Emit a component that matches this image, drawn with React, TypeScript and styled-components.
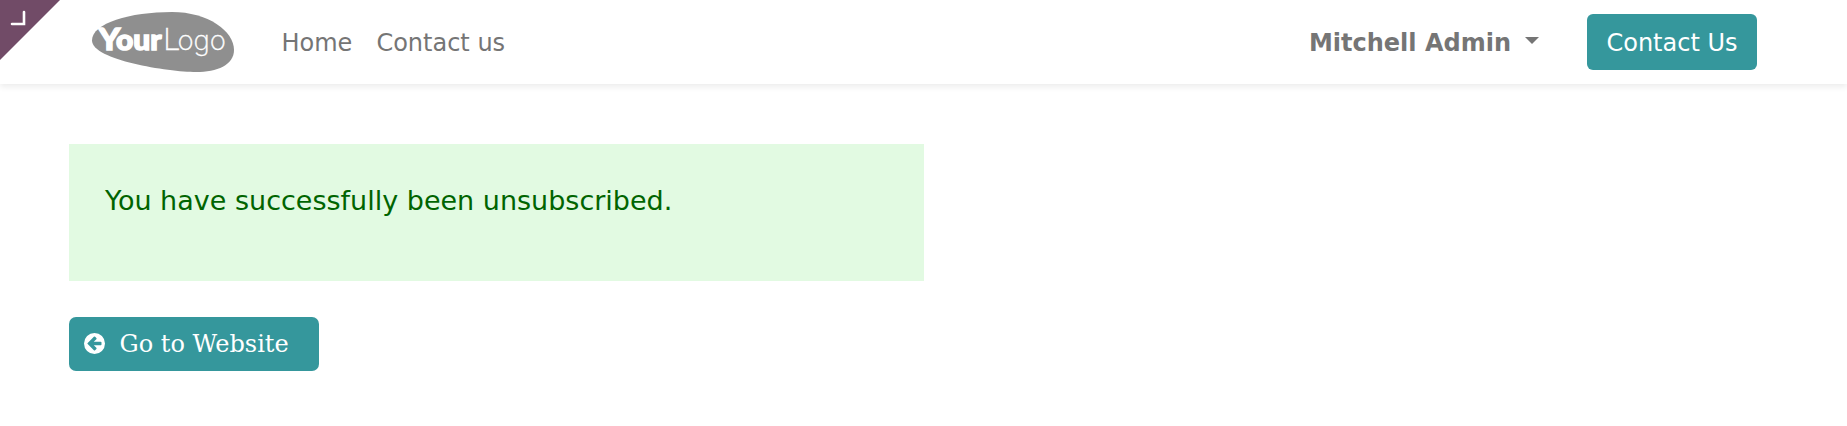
import React from "react";
import styled, { createGlobalStyle } from "styled-components";

const Global = createGlobalStyle`
  * { box-sizing: border-box; }
  body {
    margin: 0;
    background: #fff;
    color: #757575;
    font-family: "DejaVu Sans", sans-serif;
    font-size: 24px;
    line-height: 36px;
  }
  a { color: inherit; text-decoration: none; }
`;

const Header = styled.header`
  position: relative;
  height: 84px;
  padding: 0 90px 0 92px;
  display: flex;
  align-items: center;
  background: #fff;
  box-shadow: 0 3px 6px rgba(0, 0, 0, 0.075);
`;

const Corner = styled.svg`
  position: absolute;
  left: 0;
  top: 0;
`;

const Logo = styled.svg`
  display: block;
  overflow: visible;
`;

const Nav = styled.nav`
  display: flex;
  gap: 24px;
  margin-left: 47.5px;
  padding-top: 2px;
  flex: 1;
`;

const UserMenu = styled.a`
  display: flex;
  align-items: center;
  font-weight: 700;
  margin-right: 48px;
  padding-top: 2px;
`;

const Caret = styled.span`
  margin: -5px 0 0 14px;
  border: 7px solid transparent;
  border-top-color: currentColor;
  border-bottom: 0;
`;

const ContactButton = styled.a`
  width: 170px;
  height: 56px;
  padding-top: 2px;
  display: flex;
  align-items: center;
  justify-content: center;
  border-radius: 6px;
  background: #35979c;
  color: #fff;
`;

const Main = styled.main`
  padding: 60px 69px;
  display: flex;
  flex-direction: column;
  align-items: flex-start;
  gap: 36px;
`;

const Message = styled.div`
  width: 855px;
  height: 137px;
  padding: 36px;
  background: #e2fae2;
  color: #006400;
  font-size: 27px;
  line-height: 41px;
`;

const WebsiteButton = styled.a`
  width: 250px;
  height: 54px;
  padding-left: 15px;
  display: flex;
  align-items: center;
  gap: 14.6px;
  border-radius: 7px;
  background: #35979c;
  color: #fff;
  font-family: "DejaVu Serif", serif;
`;

const ArrowIcon = styled.svg`
  width: 21px;
  height: 21px;
  margin-bottom: 1px;
`;

const ArrowCircle = () => (
  <ArrowIcon viewBox="0 0 1536 1536">
    <path
      fill="#fff"
      fillRule="evenodd"
      d="M768 0a768 768 0 1 1 0 1536a768 768 0 1 1 0-1536zM1280 832v-128q0-26-19-45t-45-19h-502l189-189q19-19 19-45t-19-45l-91-91q-18-18-45-18t-45 18l-362 362-91 91q-18 18-18 45t18 45l91 91 362 362q18 18 45 18t45-18l91-91q18-18 18-45t-18-45l-189-189h502q26 0 45-19t19-45z"
    />
  </ArrowIcon>
);

export default function App() {
  return (
    <>
      <Global />
      <Header>
        <Corner width="60" height="60">
          <path d="M0 0H60L0 60z" fill="#714b67" />
          <path d="M12 24H24V12" fill="none" stroke="#fff" strokeWidth="2.6" strokeLinecap="round" />
        </Corner>
        <Logo width="142" height="60" viewBox="92 12 142 60">
          <path
            d="M92 40.5C92 23 130 12 172 12C208 12 234 31 234 50C234 65 217 72 196 72C168 72 92 60 92 40.5z"
            fill="#8f8f8f"
          />
          <g fill="#fff">
            <text
              x="98.5"
              y="50"
              fontFamily="Lato"
              fontWeight="900"
              fontSize="31"
              stroke="#fff"
              strokeWidth="1.4"
              textLength="63"
              lengthAdjust="spacingAndGlyphs"
            >
              Y<tspan fontSize="28" dx="-4">our</tspan>
            </text>
            <text
              x="163"
              y="50"
              fontFamily="Inter"
              fontWeight="200"
              fontSize="30"
              stroke="#fff"
              strokeWidth="0.3"
              textLength="63"
              lengthAdjust="spacingAndGlyphs"
            >
              L<tspan fontSize="26.5" dx="-3">ogo</tspan>
            </text>
          </g>
        </Logo>
        <Nav>
          <a>Home</a>
          <a>Contact us</a>
        </Nav>
        <UserMenu>
          Mitchell Admin
          <Caret />
        </UserMenu>
        <ContactButton>Contact Us</ContactButton>
      </Header>
      <Main>
        <Message>You have successfully been unsubscribed.</Message>
        <WebsiteButton>
          <ArrowCircle />
          Go to Website
        </WebsiteButton>
      </Main>
    </>
  );
}
